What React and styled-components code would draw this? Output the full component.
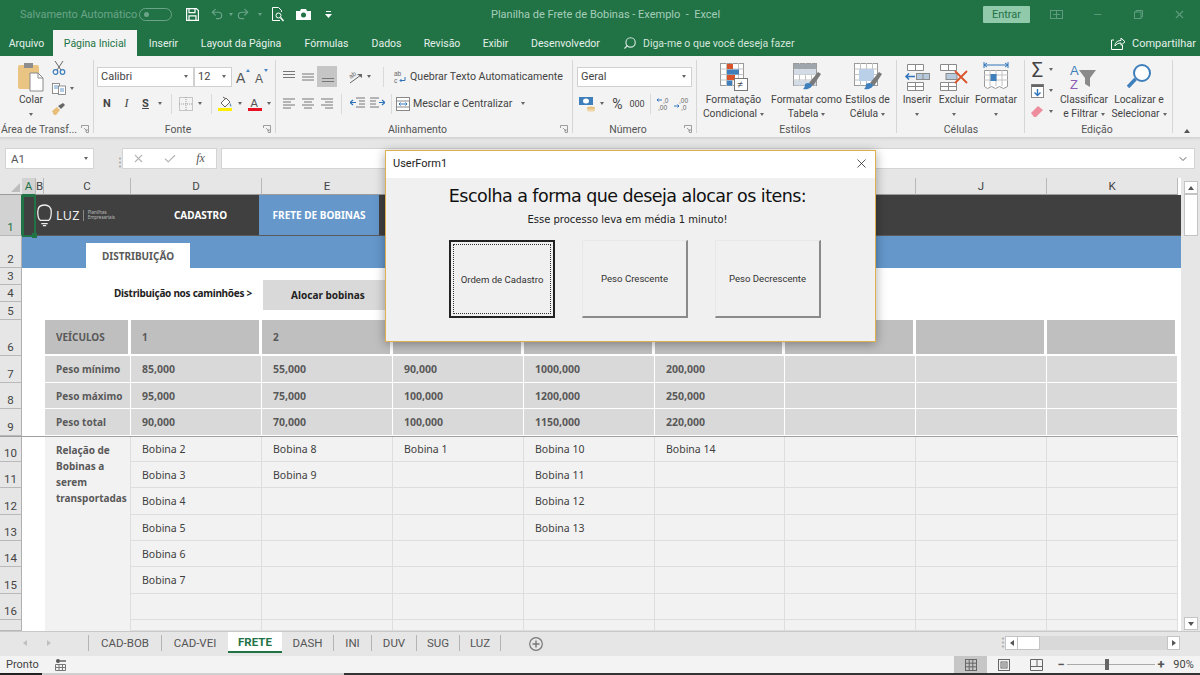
import React from 'react';
import styled, { createGlobalStyle } from 'styled-components';
import { Undo2, Redo2, Search, X, ChevronDown, Check } from 'lucide-react';

const GlobalStyle = createGlobalStyle`
  html, body { margin: 0; padding: 0; background: #e6e6e6; }
  * { box-sizing: border-box; }
`;

const UI = `Roboto, "Noto Sans", sans-serif`;
const CELLS = `"Noto Sans", "Open Sans", sans-serif`;
const GREEN = '#217346';

const Page = styled.div`
  position: relative;
  width: 1200px;
  height: 675px;
  overflow: hidden;
  display: flex;
  flex-direction: column;
  font-family: ${UI};
  font-size: 11px;
  color: #444;
`;

/* title bar */
const TitleBar = styled.div`
  height: 28px;
  background: ${GREEN};
  display: flex;
  align-items: center;
`;
const QuickAccess = styled.div`
  width: 491px;
  padding-left: 20px;
  display: flex;
  align-items: center;
  color: #6ba488;
`;
const AutoSave = styled.span`
  width: 119px;
  font-size: 11px;
  white-space: nowrap;
`;
const Toggle = styled.span`
  width: 33px;
  height: 13px;
  border: 1px solid #6ba488;
  border-radius: 7px;
  display: flex;
  align-items: center;
  padding-left: 4px;
  margin-right: 12px;
  &::before { content: ''; width: 5px; height: 5px; border-radius: 50%; background: #6ba488; }
`;
const QuickBtn = styled.span`
  width: ${p => p.$w}px;
  margin-left: ${p => p.$ml || 0}px;
  display: flex;
  justify-content: center;
  align-items: center;
  flex: none;
`;
const QuickCaret = styled.span`
  flex: none;
  width: 0;
  height: 0;
  margin: 0 ${p => p.$m}px;
  border-left: 2.5px solid transparent;
  border-right: 2.5px solid transparent;
  border-top: 3px solid #6ba488;
`;
const DocTitle = styled.span`
  color: #a6cdb9;
  font-size: 11px;
  white-space: pre;
`;
const TitleRight = styled.div`
  margin-left: auto;
  display: flex;
  align-items: center;
`;
const SignIn = styled.span`
  width: 47px;
  height: 17px;
  margin-right: 6px;
  background: #91c9ab;
  color: ${GREEN};
  border-radius: 1px;
  font-size: 11px;
  display: flex;
  align-items: center;
  justify-content: center;
`;
const WinBtn = styled.span`
  width: 41px;
  display: flex;
  justify-content: center;
  color: #5d9d7e;
`;

/* ribbon tabs */
const TabRow = styled.div`
  height: 28px;
  background: ${GREEN};
  display: flex;
  align-items: flex-end;
  color: #e4f0ea;
  font-size: 10.5px;
`;
const RibbonTab = styled.span`
  width: ${p => p.$w}px;
  height: 26px;
  flex: none;
  display: flex;
  align-items: center;
  justify-content: center;
  white-space: nowrap;
  background: ${p => (p.$active ? '#f3f3f3' : 'transparent')};
  color: ${p => (p.$active ? GREEN : 'inherit')};
`;
const TellMe = styled.span`
  width: 499px;
  padding-left: 11px;
  height: 26px;
  display: flex;
  align-items: center;
  gap: 6px;
  color: #d3e5db;
`;
const Share = styled.span`
  height: 26px;
  display: flex;
  align-items: center;
  gap: 6px;
  white-space: nowrap;
  font-size: 11px;
`;

/* ribbon */
const Ribbon = styled.div`
  height: 82px;
  background: #f3f3f3;
  border-bottom: 1px solid #d4d4d4;
  box-shadow: 0 1px 2px rgba(0,0,0,.08);
  display: flex;
  position: relative;
`;
const Group = styled.div`
  position: relative;
  width: ${p => p.$w}px;
  flex: none;
  display: flex;
  flex-direction: column;
  &::after {
    content: '';
    position: absolute;
    right: 0;
    top: 4px;
    bottom: 4px;
    width: 1px;
    background: ${p => (p.$noline ? 'transparent' : '#d6d6d6')};
  }
`;
const GroupBody = styled.div`
  height: 67px;
  display: flex;
  padding-left: ${p => p.$pl || 0}px;
`;
const GroupLabel = styled.div`
  height: 14px;
  text-align: center;
  font-size: 10.5px;
  line-height: 14px;
  color: #555;
  white-space: nowrap;
  padding-right: ${p => p.$pr || 0}px;
`;
const LauncherBox = styled.span`
  position: absolute;
  right: 5px;
  bottom: 4px;
  display: flex;
`;
const Stack = styled.div`
  display: flex;
  flex-direction: column;
  width: ${p => (p.$w ? `${p.$w}px` : 'auto')};
  margin-left: ${p => p.$ml || 0}px;
  padding-top: ${p => p.$pt ?? 10}px;
  gap: ${p => p.$gap ?? 6}px;
`;
const Line = styled.div`
  display: flex;
  align-items: center;
  height: 21px;
`;
const Btn = styled.span`
  width: ${p => p.$w || 19}px;
  height: ${p => p.$h || 21}px;
  margin-left: ${p => p.$ml || 0}px;
  flex: none;
  display: flex;
  align-items: center;
  justify-content: center;
  background: ${p => (p.$on ? '#c6c6c6' : 'transparent')};
  font-family: ${p => (p.$serif ? '"Liberation Serif", serif' : 'inherit')};
  font-weight: ${p => (p.$bold ? 700 : 400)};
  font-style: ${p => (p.$italic ? 'italic' : 'normal')};
  text-decoration: ${p => (p.$under ? 'underline' : 'none')};
  font-size: ${p => p.$fs || 11}px;
`;
const FontStep = styled.span`
  position: relative;
  width: ${p => p.$w}px;
  height: 21px;
  margin-left: ${p => p.$ml || 0}px;
  padding: ${p => (p.$down ? '5px 5px 0 2px' : '3px 5px 0 3px')};
  flex: none;
  display: flex;
  align-items: center;
  font-family: "Liberation Sans", sans-serif;
  font-size: ${p => (p.$down ? 12 : 14)}px;
  color: #555;
  &::after {
    content: '';
    position: absolute;
    right: ${p => (p.$down ? 4 : 3)}px;
    top: 3px;
    border-left: 2.5px solid transparent;
    border-right: 2.5px solid transparent;
    ${p => (p.$down ? 'border-top' : 'border-bottom')}: 3px solid #4a86c2;
  }
`;
const Sep = styled.span`
  width: 1px;
  height: 20px;
  background: #dadada;
  margin: 0 ${p => p.$m ?? 6}px;
  flex: none;
`;
const Caret = styled.span`
  flex: none;
  width: 0;
  height: 0;
  margin: 0 ${p => p.$m ?? 0}px;
  border-left: 2.5px solid transparent;
  border-right: 2.5px solid transparent;
  border-top: 3px solid #666;
  display: inline-block;
`;
const Select = styled.span`
  width: ${p => p.$w}px;
  height: 20px;
  flex: none;
  background: #fff;
  border: 1px solid #d0d0d0;
  padding: 0 5px 0 3px;
  display: flex;
  align-items: center;
  justify-content: space-between;
  font-size: 11px;
`;
const TextBtn = styled.span`
  display: flex;
  align-items: center;
  gap: 3px;
  white-space: nowrap;
  font-size: 10.6px;
`;
const Big = styled.div`
  width: ${p => p.$w}px;
  flex: none;
  display: flex;
  flex-direction: column;
  align-items: center;
  padding-top: 6px;
  font-size: 10.3px;
  line-height: 14px;
  white-space: nowrap;
`;
const BigIcon = styled.div`
  height: 30px;
  display: flex;
  align-items: center;
  justify-content: center;
  margin-bottom: 1px;
`;
const BigLine = styled.span`
  display: flex;
  align-items: center;
  gap: 3px;
  height: 14px;
`;

/* formula bar */
const FormulaBar = styled.div`
  height: 40px;
  background: #e6e6e6;
  padding: 10px 5px 0;
  display: flex;
  align-items: flex-start;
`;
const Field = styled.div`
  height: 21px;
  width: ${p => (p.$w ? `${p.$w}px` : 'auto')};
  flex: ${p => (p.$w ? 'none' : 1)};
  background: #fff;
  border: 1px solid #d4d4d4;
  display: flex;
  align-items: center;
  justify-content: space-between;
  padding: 0 5px;
  color: #555;
  font-size: 11.5px;
`;
const Dots = styled.span`
  width: 28px;
  flex: none;
  align-self: center;
  display: flex;
  justify-content: center;
  color: #aaa;
  font-size: 9px;
  line-height: 4px;
  writing-mode: vertical-rl;
  letter-spacing: 1px;
`;
const FxBtns = styled(Field)`
  justify-content: flex-start;
  padding: 0;
  margin-right: 4px;
`;
const FxBtn = styled.span`
  width: 31px;
  display: flex;
  justify-content: center;
  color: #b5b5b5;
`;
const FxLabel = styled.span`
  font-family: "Liberation Serif", serif;
  font-style: italic;
  font-size: 12px;
  color: #555;
`;

/* sheet */
const SheetArea = styled.div`
  height: 453px;
  display: flex;
  background: #e6e6e6;
`;
const Sheet = styled.div`
  width: 1181px;
  height: 453px;
  background: #fff;
  display: grid;
  grid-template-columns: 22px 14px 8px 87px 131px 131px 131px 131px 130px 131px 131px 131px 3px;
  grid-template-rows: 17px 41px 32px 17px 17px 18px 36px 27px 26px 27px 26px 26px 27px 26px 26px 27px 26px 11px;
  overflow: hidden;
  font-family: ${CELLS};
`;
const ColHead = styled.div`
  grid-column: ${p => p.$col};
  grid-row: 1;
  background: ${p => (p.$on ? '#d2d2d2' : '#e6e6e6')};
  color: ${p => (p.$on ? GREEN : '#444')};
  border-right: 1px solid #b9b9b9;
  border-bottom: 1px solid ${p => (p.$on ? GREEN : '#9c9c9c')};
  display: flex;
  align-items: center;
  justify-content: center;
  font-family: ${UI};
  font-size: 11.5px;
`;
const Corner = styled.div`
  grid-column: 1;
  grid-row: 1;
  background: #e6e6e6;
  border-bottom: 1px solid #9c9c9c;
  display: flex;
  align-items: flex-end;
  justify-content: flex-end;
  padding: 0 2px 2px 0;
  &::after {
    content: '';
    border-left: 9px solid transparent;
    border-bottom: 9px solid #bdbdbd;
  }
`;
const RowHead = styled.div`
  grid-column: 1;
  grid-row: ${p => p.$row};
  background: ${p => (p.$on ? '#d2d2d2' : '#e6e6e6')};
  color: ${p => (p.$on ? GREEN : '#444')};
  border-right: 1px solid ${p => (p.$on ? GREEN : '#b0b0b0')};
  border-bottom: 1px solid #b9b9b9;
  display: flex;
  align-items: flex-end;
  justify-content: center;
  font-family: ${UI};
  font-size: 11.5px;
  line-height: 15px;
`;
const HeaderBand = styled.div`
  grid-column: 2 / -1;
  grid-row: 2;
  background: #404040;
  display: flex;
  color: #fff;
  font-weight: 700;
  font-size: 10px;
  border-bottom: 1px solid #5a5a5a;
`;
const LogoWrap = styled.div`
  width: 120px;
  padding-left: 15px;
  display: flex;
  align-items: center;
  color: #eee;
`;
const LogoName = styled.span`
  font-size: 12.5px;
  font-weight: 400;
  margin-left: 4px;
  letter-spacing: .3px;
`;
const LogoSub = styled.span`
  margin-left: 3px;
  padding-left: 4px;
  border-left: 1px solid #888;
  font-size: 4.5px;
  line-height: 5.5px;
  font-weight: 400;
  color: #bbb;
`;
const NavItem = styled.div`
  width: ${p => p.$w}px;
  flex: none;
  display: flex;
  align-items: center;
  justify-content: center;
  background: ${p => (p.$on ? '#6597cb' : 'transparent')};
`;
const BlueBand = styled.div`
  grid-column: 2 / -1;
  grid-row: 3;
  background: #6597cb;
  padding: 7px 0 0 64px;
  display: flex;
`;
const SubTab = styled.div`
  width: 104px;
  background: #fff;
  display: flex;
  align-items: center;
  justify-content: center;
  font-size: 10px;
  font-weight: 700;
  color: #595959;
`;
const ActionLabel = styled.div`
  grid-column: 2 / 6;
  grid-row: 4 / 7;
  display: flex;
  align-items: center;
  justify-content: flex-end;
  padding: 0 10px 3px 0;
  font-size: 10px;
  font-weight: 700;
  letter-spacing: -.28px;
  color: #222;
`;
const ActionBtn = styled.div`
  grid-column: 6;
  grid-row: 4 / 7;
  margin: 12px 0 10px 1px;
  background: #d9d9d9;
  display: flex;
  align-items: center;
  justify-content: center;
  font-size: 10px;
  font-weight: 700;
  color: #222;
`;
const tones = {
  head: { bg: '#bfbfbf', line: '#fff', weight: 700, right: 3, bottom: 2, size: 10 },
  sub: { bg: '#d9d9d9', line: '#fff', weight: 700, right: 1, bottom: 1, size: 10.5 },
  body: { bg: '#f2f2f2', line: '#dedede', weight: 400, right: 1, bottom: 1, size: 10.5 },
};
const Cell = styled.div`
  grid-column: ${p => p.$col};
  grid-row: ${p => p.$row};
  background: ${p => tones[p.$tone].bg};
  border-right: ${p => tones[p.$tone].right}px solid ${p => tones[p.$tone].line};
  border-bottom: ${p => tones[p.$tone].bottom}px solid ${p => tones[p.$tone].line};
  display: flex;
  align-items: center;
  padding-left: 11px;
  font-size: ${p => tones[p.$tone].size}px;
  font-weight: ${p => tones[p.$tone].weight};
  color: ${p => (p.$tone === 'body' ? '#404040' : '#595959')};
`;
const LabelCol = styled.div`
  grid-column: 4;
  grid-row: ${p => p.$row};
  margin-left: 1px;
  background: ${p => tones[p.$tone].bg};
  border-right: ${p => tones[p.$tone].right}px solid ${p => tones[p.$tone].line};
  border-bottom: ${p => tones[p.$tone].bottom}px solid ${p => tones[p.$tone].line};
  display: flex;
  align-items: center;
  padding-left: 11px;
  font-size: 10px;
  font-weight: 700;
  color: #595959;
`;
const BobinaLabel = styled(LabelCol)`
  align-items: flex-start;
  padding-top: 6px;
  line-height: 16px;
  border-bottom: none;
  white-space: pre-line;
`;
const RowRule = styled.div`
  grid-column: 1 / 13;
  grid-row: 11;
  height: 1px;
  background: #a0a0a0;
  z-index: 1;
`;
const Scroll = styled.div`
  flex: 1;
  padding: 3px 0 1px 3px;
  display: flex;
  flex-direction: column;
`;
const ScrollArrow = styled.div`
  width: 14px;
  height: 13px;
  background: #fff;
  border: 1px solid #c4c4c4;
  display: flex;
  align-items: center;
  justify-content: center;
`;
const ScrollThumb = styled.div`
  width: 14px;
  height: 42px;
  background: #fff;
  border: 1px solid #c4c4c4;
  margin-bottom: auto;
`;
const Tri = styled.span`
  display: inline-block;
  width: 0;
  height: 0;
  border-left: 3px solid transparent;
  border-right: 3px solid transparent;
  ${p => (p.$up ? 'border-bottom' : 'border-top')}: 4px solid #555;
`;
const SideTri = styled.span`
  width: 0;
  height: 0;
  border-top: 3px solid transparent;
  border-bottom: 3px solid transparent;
  ${p => (p.$left ? 'border-right' : 'border-left')}: 4px solid ${p => p.$c || '#555'};
`;
const Selection = styled.div`
  position: absolute;
  left: 22px;
  top: 195px;
  width: 14px;
  height: 42px;
  border: 2px solid ${GREEN};
  &::after {
    content: '';
    position: absolute;
    right: -3px;
    bottom: -3px;
    width: 5px;
    height: 5px;
    background: ${GREEN};
  }
`;

/* sheet tabs */
const SheetTabs = styled.div`
  height: 25px;
  background: #e6e6e6;
  border-top: 1px solid #c8c8c8;
  display: flex;
  align-items: stretch;
`;
const TabNav = styled.div`
  width: 89px;
  padding: 0 37px 0 23px;
  border-right: 1px solid #b4b4b4;
  margin: 3px 0 5px;
  display: flex;
  align-items: center;
  justify-content: space-between;
`;
const SheetTab = styled.span`
  width: ${p => p.$w}px;
  flex: none;
  display: flex;
  align-items: center;
  justify-content: center;
  font-size: 11.5px;
  color: ${p => (p.$on ? GREEN : '#555')};
  font-weight: ${p => (p.$on ? 700 : 400)};
  background: ${p => (p.$on ? '#fff' : 'transparent')};
  margin-bottom: ${p => (p.$on ? 3 : 5)}px;
  margin-top: ${p => (p.$on ? 0 : 3)}px;
  border-bottom: ${p => (p.$on ? `2px solid ${GREEN}` : 'none')};
  border-right: ${p => (p.$on || p.$noline ? 'none' : '1px solid #b4b4b4')};
`;
const AddSheet = styled.span`
  margin: 0 0 0 28px;
  align-self: center;
  display: flex;
`;
const HScroll = styled.div`
  margin: 4px 20px 0 auto;
  display: flex;
  align-items: flex-start;
  height: 14px;
`;
const HDots = styled(Dots)`
  width: 14px;
  height: 14px;
`;
const HArrow = styled.span`
  width: 13px;
  height: 14px;
  background: #fff;
  border: 1px solid #c4c4c4;
  display: flex;
  align-items: center;
  justify-content: center;
`;
const HThumb = styled.span`
  width: 22px;
  height: 14px;
  background: #fff;
  border: 1px solid #c4c4c4;
  border-left: none;
`;
const HTrack = styled.span`
  width: 127px;
  height: 14px;
  background: #d9d9d9;
`;

/* status bar */
const StatusBar = styled.div`
  height: 17px;
  background: #f3f3f3;
  display: flex;
  align-items: center;
  padding-left: 6px;
  font-size: 11px;
  color: #444;
`;
const StatusText = styled.span`
  width: 49px;
`;
const StatusIcon = styled.span`
  display: flex;
`;
const ViewGroup = styled.div`
  margin-left: auto;
  display: flex;
  align-items: center;
  height: 17px;
`;
const ViewBtn = styled.span`
  width: 33px;
  height: 17px;
  margin-right: ${p => p.$mr || 0}px;
  background: ${p => (p.$on ? '#c6c6c6' : 'transparent')};
  display: flex;
  align-items: center;
  justify-content: center;
`;
const ZoomSlider = styled.span`
  position: relative;
  width: 88px;
  height: 1px;
  background: #aaa;
`;
const ZoomThumb = styled.span`
  position: absolute;
  left: 38px;
  top: -5px;
  width: 4px;
  height: 11px;
  background: #666;
`;
const ZoomSign = styled.span`
  width: 12px;
  text-align: center;
  font-size: 13px;
  line-height: 13px;
  color: #555;
  font-weight: 700;
`;
const ZoomPct = styled.span`
  width: 33px;
  text-align: center;
  font-size: 11px;
`;
const TaskStrip = styled.div`
  height: 2px;
  background: linear-gradient(90deg, #222 0 42px, #cfcfcf 42px 344px, #333 344px);
`;

/* userform dialog */
const Dialog = styled.div`
  position: absolute;
  left: 385px;
  top: 150px;
  width: 491px;
  height: 192px;
  border: 1px solid #e0b050;
  background: #f0f0f0;
  box-shadow: 0 2px 10px rgba(0,0,0,.35);
  display: flex;
  flex-direction: column;
  font-family: "DejaVu Sans", sans-serif;
`;
const DialogTitle = styled.div`
  height: 27px;
  background: #fff;
  padding: 0 6px 3px 7px;
  display: flex;
  align-items: center;
  justify-content: space-between;
  font-family: ${UI};
  font-size: 11px;
  color: #222;
`;
const DialogHeading = styled.div`
  margin-top: 6px;
  padding-right: 6px;
  text-align: center;
  font-size: 17.5px;
  line-height: 24px;
  letter-spacing: -.55px;
  color: #111;
  white-space: nowrap;
`;
const DialogSub = styled.div`
  margin-top: 4px;
  padding-right: 6px;
  text-align: center;
  font-size: 10px;
  line-height: 15px;
  color: #222;
`;
const ChoiceRow = styled.div`
  margin: 13px 0 0 63px;
  display: flex;
  gap: 27px;
`;
const Choice = styled.div`
  position: relative;
  width: 106px;
  height: 78px;
  background: #f0f0f0;
  display: flex;
  align-items: center;
  justify-content: center;
  font-family: ${UI};
  font-size: 9.6px;
  color: #333;
  border-top: 1px solid #e8e8e8;
  border-left: 1px solid #e8e8e8;
  border-right: 2px solid #8a8a8a;
  border-bottom: 2px solid #8a8a8a;
  ${p => p.$focus && `
    border: 2px solid #222;
    &::after {
      content: '';
      position: absolute;
      inset: 2px;
      border: 1px dotted #333;
    }
  `}
`;

/* drawings */
const Launcher = () => (
  <svg width="8" height="8" viewBox="0 0 8 8"><path d="M.5 3V.5H7.500V7.500H5M3 3l3 3M6 4v2H4" fill="none" stroke="#888" strokeWidth=".8" /></svg>
);
const PasteIcon = () => (
  <svg width="26" height="30" viewBox="0 0 26 30">
    <rect x="0" y="3" width="21" height="24" rx="2" fill="#eac483" />
    <rect x="6" y="1" width="9" height="5" fill="#8d8d8d" />
    <path d="M12 11h8l5 5v13H12z" fill="#fff" stroke="#8a8a8a" />
    <path d="M20 11v5h5" fill="none" stroke="#8a8a8a" />
  </svg>
);
const CutIcon = () => (
  <svg width="14" height="14" viewBox="0 0 14 14" fill="none">
    <path d="M3 0l6 9M11 0L5 9" stroke="#666" />
    <circle cx="3.500" cy="11" r="2.300" stroke="#3f7fbc" strokeWidth="1.200" />
    <circle cx="10.500" cy="11" r="2.300" stroke="#3f7fbc" strokeWidth="1.200" />
  </svg>
);
const CopyIcon = () => (
  <svg width="14" height="12" viewBox="0 0 14 12" fill="#fff" stroke="#777" strokeWidth=".8">
    <rect x=".5" y=".5" width="7" height="10" />
    <rect x="6.500" y="3" width="7" height="8.500" />
    <path d="M2 3h4M2 5h4M8 6h4M8 8h4" stroke="#3f7fbc" />
  </svg>
);
const BrushIcon = () => (
  <svg width="14" height="12" viewBox="0 0 14 12">
    <path d="M0 8l5-4 3 3-4 5H2z" fill="#e8bd78" />
    <path d="M6 3l3 3 4-4-2-2z" fill="#666" />
  </svg>
);
const Borders = () => (
  <svg width="14" height="14" viewBox="0 0 14 14" fill="none" stroke="#999" strokeDasharray="1 1">
    <rect x=".5" y=".5" width="13" height="13" /><path d="M7 0v14M0 7h14" />
  </svg>
);
const FillColor = () => (
  <svg width="15" height="15" viewBox="0 0 15 15">
    <path d="M3 7l5-5 4 4-5 5z" fill="#fff" stroke="#666" />
    <path d="M5 1l3 2" stroke="#666" />
    <path d="M12 7c1 1.500 2 3 1 3.500-1 .3-1.500-1-1-3.500" fill="#4f8ac4" />
    <rect x="0" y="12" width="14" height="3" fill="#ffee00" />
  </svg>
);
const FontColor = () => (
  <svg width="15" height="15" viewBox="0 0 15 15">
    <text x="2.500" y="10.500" fontSize="11" fontFamily="Liberation Sans" fill="#555">A</text>
    <rect x="0" y="12" width="14" height="3" fill="#e81123" />
  </svg>
);
const Align = ({ kind }) => {
  const rows = {
    top: ['M1 1.500h12', 'M1 4.500h12', 'M1 7.500h12'],
    middle: ['M1 4h12', 'M1 7h12', 'M1 10h12'],
    bottom: ['M2 8.500h12', 'M2 11.500h12'],
    left: ['M1 2h12', 'M1 5h8', 'M1 8h12', 'M1 11h8'],
    center: ['M1 2h12', 'M3 5h8', 'M1 8h12', 'M3 11h8'],
    right: ['M1 2h12', 'M5 5h8', 'M1 8h12', 'M5 11h8'],
  };
  return (
    <svg width="14" height="14" viewBox="0 0 14 14" fill="none" stroke="#777">
      {rows[kind].map(d => <path key={d} d={d} />)}
    </svg>
  );
};
const Indent = ({ flip }) => (
  <svg width="15" height="13" viewBox="0 0 15 13" fill="none" style={flip ? { transform: 'scaleX(-1)' } : undefined}>
    <path d="M6 1h9M9 4h6M9 7h6M6 10h9" stroke="#777" />
    <path d="M0 5.500h6M3 3l-3 2.500L3 8" stroke="#2f74bb" strokeWidth="1.200" />
  </svg>
);
const Orientation = () => (
  <svg width="18" height="17" viewBox="0 0 18 17">
    <text x="3" y="9" fontSize="6.500" fontFamily="Liberation Sans" fill="#666" transform="rotate(-35 7 7)">ab</text>
    <path d="M4 15L15 7" stroke="#666" />
    <path d="M11 6h5v4z" fill="#666" />
  </svg>
);
const WrapIcon = () => (
  <svg width="14" height="14" viewBox="0 0 14 14">
    <text x="1" y="6" fontSize="6.500" fontFamily="Liberation Sans" fill="#666">ab</text>
    <text x="1" y="13" fontSize="6.500" fontFamily="Liberation Sans" fill="#666">c</text>
    <path d="M12 7v3.500H7M8.500 9L7 10.500 8.500 12" fill="none" stroke="#2f74bb" />
  </svg>
);
const MergeIcon = () => (
  <svg width="14" height="14" viewBox="0 0 14 14" fill="#fff" stroke="#888">
    <rect x=".5" y=".5" width="13" height="13" />
    <path d="M.5 4h13M.5 10h13" />
    <path d="M3 7h8M4.500 5.500L3 7l1.500 1.500M9.500 5.500L11 7 9.500 8.500" stroke="#2f74bb" fill="none" />
  </svg>
);
const Currency = () => (
  <svg width="20" height="17" viewBox="0 0 20 17">
    <rect x="1" y="2" width="14" height="8" fill="#3f7fbc" />
    <ellipse cx="8" cy="6" rx="3" ry="2.500" fill="#fff" />
    <ellipse cx="13" cy="13" rx="4" ry="1.500" fill="#e8bd78" />
    <ellipse cx="13" cy="15" rx="4" ry="1.500" fill="#eed3a5" />
  </svg>
);
const Decimal = ({ more }) => (
  <svg width="16" height="14" viewBox="0 0 16 14">
    <text x={more ? 5 : 7} y="6" fontSize="6.500" fontFamily="Liberation Sans" fill="#666">{more ? ',00' : ',0'}</text>
    <text x={more ? 7 : 2} y="13" fontSize="6.500" fontFamily="Liberation Sans" fill="#666">{more ? ',0' : ',00'}</text>
    <path d={more ? 'M0 9h5M3.500 7.500L5 9l-1.500 1.500' : 'M1 3h5M2.500 1.500L1 3l1.500 1.500'} fill="none" stroke="#2f74bb" />
  </svg>
);
const TableBase = ({ children, fill = '#fff' }) => (
  <svg width="28" height="28" viewBox="0 0 28 28">
    <rect x=".5" y=".5" width="23" height="22" fill={fill} stroke="#9a9a9a" />
    <path d="M.5 6h23M.5 11.500h23M.5 17h23M6.500 0v23M12.500 0v23M18.500 0v23" stroke="#c2c2c2" fill="none" />
    {children}
  </svg>
);
const ConditionalIcon = () => (
  <TableBase>
    <rect x="7" y="1" width="6" height="5" fill="#d9542b" />
    <rect x="7" y="6.500" width="12" height="5" fill="#3f7fbc" />
    <rect x="7" y="12" width="8" height="5" fill="#d9542b" />
    <rect x="7" y="17.500" width="5" height="5" fill="#3f7fbc" />
    <rect x="14.500" y="15.500" width="13" height="12" fill="#fff" stroke="#777" />
    <text x="17.500" y="25" fontSize="10" fontFamily="Liberation Sans" fill="#444">≠</text>
  </TableBase>
);
const Painter = () => (
  <g>
    <path d="M16 20l9-11 3 2-8 12z" fill="#7a7a7a" />
    <path d="M12 21c3-2 6-1 7 1 0 3-5 5-9 4 1-1 2-2 2-5z" fill="#3f7fbc" />
  </g>
);
const TableStyleIcon = () => (
  <TableBase>
    <rect x="1" y="1" width="22" height="5" fill="#a0a6ae" />
    <rect x="1" y="6.500" width="22" height="5" fill="#d2dbe6" />
    <rect x="1" y="17.500" width="22" height="5" fill="#d2dbe6" />
    <Painter />
  </TableBase>
);
const CellStyleIcon = () => (
  <TableBase>
    <rect x="5" y="6" width="15" height="12" fill="#b9d0e8" />
    <Painter />
  </TableBase>
);
const InsertIcon = () => (
  <svg width="26" height="28" viewBox="0 0 26 28" fill="#fff" stroke="#8a8a8a">
    <path d="M3.500 1.500h16v6h-16zM11.500 1.500v6M3.500 19.500h16v8h-16zM3.500 23.500h16M11.500 19.500v8" />
    <rect x="12.500" y="10.500" width="13" height="6" fill="#b7c9dc" />
    <path d="M19 10.500v6" />
    <path d="M2 13.500h9M5 10.500l-3 3 3 3" fill="none" stroke="#2f74bb" strokeWidth="1.500" />
  </svg>
);
const DeleteIcon = () => (
  <svg width="28" height="28" viewBox="0 0 28 28" fill="#fff" stroke="#8a8a8a">
    <path d="M.5 1.500h16v6H.5zM8.500 1.500v6M.5 19.500h16v8H.5zM.500 23.500h16M8.500 19.500v8" />
    <rect x="6" y="10.500" width="11" height="6" fill="#b7c9dc" />
    <path d="M15 8l12 12M27 8L15 20" stroke="#d9542b" strokeWidth="1.800" />
  </svg>
);
const FormatIcon = () => (
  <svg width="26" height="30" viewBox="0 0 26 30" fill="none">
    <path d="M1 3h24M4 1L1 3l3 2M22 1l3 2-3 2M1 0v6M25 0v6" stroke="#2f74bb" />
    <path d="M1.500 8.500h23v16l-4 2-4-2-4 2-4-2-4 2-3-2z" fill="#fff" stroke="#9a9a9a" />
    <path d="M1 13h24M1 18h24M7 8v16M13 8v16M19 8v16" stroke="#c2c2c2" />
    <rect x="7.500" y="12" width="6" height="7" fill="#3f7fbc" />
  </svg>
);
const FillDown = () => (
  <svg width="14" height="14" viewBox="0 0 14 14">
    <rect x=".5" y=".5" width="12" height="13" fill="#fff" stroke="#888" />
    <rect x=".5" y=".5" width="12" height="2.500" fill="#666" />
    <path d="M6.500 5v6M3.500 8.500l3 3 3-3" fill="none" stroke="#2f74bb" strokeWidth="1.400" />
  </svg>
);
const Eraser = () => (
  <svg width="13" height="11" viewBox="0 0 13 11"><path d="M0 7l7-7 5 4-7 7H3z" fill="#ee8d9e" /></svg>
);
const SortIcon = () => (
  <svg width="30" height="30" viewBox="0 0 30 30">
    <text x="1" y="13" fontSize="13" fontFamily="Liberation Sans" fill="#3f7fbc">A</text>
    <text x="1" y="27" fontSize="13" fontFamily="Liberation Sans" fill="#8e5bb5">Z</text>
    <path d="M10 8h17l-6 8v9l-5-3v-6z" fill="#8a8a8a" />
  </svg>
);
const FindIcon = () => (
  <svg width="26" height="28" viewBox="0 0 26 28" fill="none">
    <circle cx="16" cy="10" r="8" stroke="#3f7fbc" strokeWidth="2" fill="#fff" />
    <path d="M9.500 16L2 24" stroke="#3f7fbc" strokeWidth="3.500" />
  </svg>
);
const SaveIcon = () => (
  <svg width="13" height="13" viewBox="0 0 13 13" fill="none" stroke="#fff" strokeWidth="1.200">
    <path d="M.6.6h9.800l2 2v9.800H.6z" /><path d="M3 .6v4h6v-4M3 12.400v-4.500h7v4.500" />
  </svg>
);
const PreviewIcon = () => (
  <svg width="13" height="15" viewBox="0 0 13 15" fill="none" stroke="#fff">
    <path d="M8 13.500H.5V.5h6l3 3V5" /><circle cx="6.500" cy="8.500" r="2.500" /><path d="M8.500 10.500l3 3.500" strokeWidth="1.500" />
  </svg>
);
const CameraIcon = () => (
  <svg width="15" height="11" viewBox="0 0 15 11">
    <path d="M0 2h4l1-2h5l1 2h4v9H0z" fill="#fff" /><circle cx="7.500" cy="6" r="2.500" fill={GREEN} />
  </svg>
);
const Customize = () => (
  <svg width="7" height="7" viewBox="0 0 7 7" fill="#fff"><rect x="1" y="0" width="5" height="1" /><path d="M0 3h7L3.500 7z" /></svg>
);
const CardsIcon = () => (
  <svg width="13" height="9" viewBox="0 0 13 9" fill="none" stroke="#5d9d7e"><rect x=".5" y=".5" width="12" height="8" /><path d="M6.500 1v7M3 4.500h7" /></svg>
);
const RestoreIcon = () => (
  <svg width="9" height="9" viewBox="0 0 9 9" fill="none" stroke="#5d9d7e"><path d="M2 2V.5h6.500V7H7" /><rect x=".5" y="2" width="6.500" height="6.500" /></svg>
);
const ShareIcon = () => (
  <svg width="15" height="13" viewBox="0 0 15 13" fill="none" stroke="#fff"><path d="M3 3H.5v9.500h11V8" /><path d="M4 9c0-4 3-5.500 6-5.500V1l4 3.800-4 3.500V6C7 6 5.500 7 4 9z" /></svg>
);
const LogoBulb = () => (
  <svg width="15" height="23" viewBox="0 0 14 21" fill="none" stroke="#eee" strokeWidth="1.200">
    <path d="M3 15C1 13.500.7 11 .7 7 .7 3 3 .7 7 .7s6.300 2.300 6.300 6.300c0 4-.3 6.500-2.300 8z" />
    <path d="M4 18h6M5.500 20h3" />
  </svg>
);
const PageView = () => (
  <svg width="12" height="12" viewBox="0 0 12 12" fill="none" stroke="#666"><rect x=".5" y=".5" width="11" height="11" /><rect x="3" y="3" width="6" height="6" /><path d="M4 5h4M4 7h4" /></svg>
);
const GridView = () => (
  <svg width="12" height="12" viewBox="0 0 12 12" fill="none" stroke="#666"><rect x=".5" y=".5" width="11" height="11" /><path d="M4.200 0v12M7.800 0v12M0 4.200h12M0 7.800h12" /></svg>
);
const BreakView = () => (
  <svg width="13" height="12" viewBox="0 0 13 12" fill="none" stroke="#666"><path d="M.5 11.500V.5h12v11zM.5 7.500h12M7 .5v7" /></svg>
);
const MacroIcon = () => (
  <svg width="11" height="12" viewBox="0 0 11 12"><circle cx="3" cy="2" r="2" fill="#555" /><rect x="5" y="1" width="6" height="2" fill="#888" /><path d="M.5 5.500h10v6H.5zM4 5.500v6M7.500 5.500v6M.5 8.500h10" fill="none" stroke="#777" /></svg>
);
const PlusCircle = () => (
  <svg width="14" height="14" viewBox="0 0 14 14" fill="none" stroke="#777"><circle cx="7" cy="7" r="6.300" strokeWidth="1.200" /><path d="M3.500 7h7M7 3.500v7" strokeWidth="1.400" /></svg>
);

/* data */
const colLetters = ['A', 'B', 'C', 'D', 'E', 'F', 'G', 'H', 'I', 'J', 'K'];
const rowHeads = Array.from({ length: 16 }, (_, i) => i + 1);
const pesos = [
  ['Peso mínimo', '85,000', '55,000', '90,000', '1000,000', '200,000'],
  ['Peso máximo', '95,000', '75,000', '100,000', '1200,000', '250,000'],
  ['Peso total', '90,000', '70,000', '100,000', '1150,000', '220,000'],
];
const bobinas = [
  ['Bobina 2', 'Bobina 8', 'Bobina 1', 'Bobina 10', 'Bobina 14'],
  ['Bobina 3', 'Bobina 9', '', 'Bobina 11', ''],
  ['Bobina 4', '', '', 'Bobina 12', ''],
  ['Bobina 5', '', '', 'Bobina 13', ''],
  ['Bobina 6', '', '', '', ''],
  ['Bobina 7', '', '', '', ''],
  ['', '', '', '', ''],
  ['', '', '', '', ''],
];
const sheets = [['CAD-BOB', 73], ['CAD-VEI', 66], ['FRETE', 54], ['DASH', 52], ['INI', 38], ['DUV', 45], ['SUG', 43], ['LUZ', 41]];
const dataCols = [5, 6, 7, 8, 9, 10, 11, 12];

const BigButton = ({ w, icon, first, second }) => (
  <Big $w={w}>
    <BigIcon>{icon}</BigIcon>
    <BigLine>{first}</BigLine>
    <BigLine>{second}<Caret /></BigLine>
  </Big>
);

const RibbonPanel = () => (
  <Ribbon>
    <Group $w={94}>
      <GroupBody $pl={17}>
        <Big $w={28}>
          <BigIcon><PasteIcon /></BigIcon>
          <BigLine>Colar</BigLine>
          <BigLine><Caret /></BigLine>
        </Big>
        <Stack $pt={2} $gap={0} $ml={4}>
          <Btn $w={20} $h={20}><CutIcon /></Btn>
          <Line><Btn $w={20}><CopyIcon /></Btn><Caret $m={1} /></Line>
          <Btn $w={20} $h={20}><BrushIcon /></Btn>
        </Stack>
      </GroupBody>
      <GroupLabel $pr={16}>Área de Transf...</GroupLabel>
      <LauncherBox><Launcher /></LauncherBox>
    </Group>
    <Group $w={182}>
      <GroupBody $pl={3}>
        <Stack>
          <Line>
            <Select $w={97}>Calibri<Caret /></Select>
            <Select $w={38}>12<Caret /></Select>
            <FontStep $w={20} $ml={1}>A</FontStep>
            <FontStep $w={19} $down>A</FontStep>
          </Line>
          <Line>
            <Btn $w={20} $bold $fs={11}>N</Btn>
            <Btn $italic $serif $fs={12}>I</Btn>
            <Btn $under $bold $fs={11}>S</Btn>
            <Caret $m={3} />
            <Sep $m={6} />
            <Btn $w={15}><Borders /></Btn>
            <Caret $m={5} />
            <Sep $m={4} />
            <Btn $w={18}><FillColor /></Btn>
            <Caret $m={4} />
            <Btn $w={19}><FontColor /></Btn>
            <Caret $m={2} />
          </Line>
        </Stack>
      </GroupBody>
      <GroupLabel $pr={14}>Fonte</GroupLabel>
      <LauncherBox><Launcher /></LauncherBox>
    </Group>
    <Group $w={297}>
      <GroupBody $pl={3}>
        <Stack>
          <Line>
            <Btn><Align kind="top" /></Btn>
            <Btn><Align kind="middle" /></Btn>
            <Btn $w={20} $on><Align kind="bottom" /></Btn>
            <Btn $w={18} $ml={9}><Orientation /></Btn>
            <Caret $m={3} />
            <Sep $m={9} />
            <TextBtn><WrapIcon />Quebrar Texto Automaticamente</TextBtn>
          </Line>
          <Line>
            <Btn><Align kind="left" /></Btn>
            <Btn><Align kind="center" /></Btn>
            <Btn><Align kind="right" /></Btn>
            <Sep $m={5} />
            <Btn $w={20}><Indent /></Btn>
            <Btn $w={20}><Indent flip /></Btn>
            <Sep $m={4} />
            <TextBtn><MergeIcon />Mesclar e Centralizar<Caret $m={6} /></TextBtn>
          </Line>
        </Stack>
      </GroupBody>
      <GroupLabel $pr={14}>Alinhamento</GroupLabel>
      <LauncherBox><Launcher /></LauncherBox>
    </Group>
    <Group $w={124}>
      <GroupBody $pl={4}>
        <Stack>
          <Line><Select $w={115}>Geral<Caret /></Select></Line>
          <Line>
            <Btn $w={21}><Currency /></Btn>
            <Caret $m={2} />
            <Btn $w={23} $fs={14}>%</Btn>
            <Btn $w={16} $fs={9}>000</Btn>
            <Sep $m={5} />
            <Btn $w={16}><Decimal /></Btn>
            <Btn $w={20}><Decimal more /></Btn>
          </Line>
        </Stack>
      </GroupBody>
      <GroupLabel $pr={14}>Número</GroupLabel>
      <LauncherBox><Launcher /></LauncherBox>
    </Group>
    <Group $w={200}>
      <GroupBody>
        <BigButton w={73} icon={<ConditionalIcon />} first="Formatação" second="Condicional" />
        <BigButton w={73} icon={<TableStyleIcon />} first="Formatar como" second="Tabela" />
        <BigButton w={49} icon={<CellStyleIcon />} first="Estilos de" second="Célula" />
      </GroupBody>
      <GroupLabel $pr={4}>Estilos</GroupLabel>
    </Group>
    <Group $w={128}>
      <GroupBody $pl={2}>
        <BigButton w={36} icon={<InsertIcon />} first="Inserir" second="" />
        <BigButton w={38} icon={<DeleteIcon />} first="Excluir" second="" />
        <BigButton w={46} icon={<FormatIcon />} first="Formatar" second="" />
      </GroupBody>
      <GroupLabel>Células</GroupLabel>
    </Group>
    <Group $w={148}>
      <GroupBody $pl={4}>
        <Stack $pt={3} $gap={0} $w={29}>
          <Line><Btn $w={17} $fs={20}>Σ</Btn><Caret $m={3} /></Line>
          <Line><Btn $w={17}><FillDown /></Btn><Caret $m={3} /></Line>
          <Line><Btn $w={17}><Eraser /></Btn><Caret $m={3} /></Line>
        </Stack>
        <BigButton w={52} icon={<SortIcon />} first="Classificar" second="e Filtrar" />
        <BigButton w={58} icon={<FindIcon />} first="Localizar e" second="Selecionar" />
      </GroupBody>
      <GroupLabel $pr={4}>Edição</GroupLabel>
    </Group>
    <Group $w={27} $noline>
      <GroupBody />
      <GroupLabel><Tri $up /></GroupLabel>
    </Group>
  </Ribbon>
);

const SheetGrid = () => (
  <Sheet>
    <Corner />
    {colLetters.map((c, i) => (
      <ColHead key={c} $col={i + 2} $on={c === 'A'}>{c}</ColHead>
    ))}
    {rowHeads.map(n => (
      <RowHead key={n} $row={n + 1} $on={n === 1}>{n}</RowHead>
    ))}
    <RowHead $row={18} />

    <HeaderBand>
      <LogoWrap>
        <LogoBulb />
        <LogoName>LUZ</LogoName>
        <LogoSub>Planilhas<br />Empresariais</LogoSub>
      </LogoWrap>
      <NavItem $w={117}>CADASTRO</NavItem>
      <NavItem $w={120} $on>FRETE DE BOBINAS</NavItem>
    </HeaderBand>
    <BlueBand><SubTab>DISTRIBUIÇÃO</SubTab></BlueBand>
    <ActionLabel>Distribuição nos caminhões &gt;</ActionLabel>
    <ActionBtn>Alocar bobinas</ActionBtn>

    <LabelCol $row={7} $tone="head">VEÍCULOS</LabelCol>
    {dataCols.map((col, i) => (
      <Cell key={col} $col={col} $row={7} $tone="head">{i < 2 ? i + 1 : ''}</Cell>
    ))}
    {pesos.map((row, r) => (
      <React.Fragment key={row[0]}>
        <LabelCol $row={r + 8} $tone="sub">{row[0]}</LabelCol>
        {dataCols.map((col, i) => (
          <Cell key={col} $col={col} $row={r + 8} $tone="sub">{row[i + 1]}</Cell>
        ))}
      </React.Fragment>
    ))}
    <RowRule />
    <BobinaLabel $row="11 / 19" $tone="body">{'Relação de\nBobinas a\nserem\ntransportadas'}</BobinaLabel>
    {bobinas.map((row, r) => dataCols.map((col, i) => (
      <Cell key={`${r}-${col}`} $col={col} $row={r + 11} $tone="body">{row[i]}</Cell>
    )))}
  </Sheet>
);

const App = () => (
  <Page>
    <GlobalStyle />
    <TitleBar>
      <QuickAccess>
        <AutoSave>Salvamento Automático</AutoSave>
        <Toggle />
        <QuickBtn $w={16}><SaveIcon /></QuickBtn>
        <QuickBtn $w={20} $ml={7}><Undo2 size={14} color="#6ba488" /></QuickBtn>
        <QuickCaret $m={2} />
        <QuickBtn $w={16}><Redo2 size={14} color="#6ba488" /></QuickBtn>
        <QuickCaret $m={7} />
        <QuickBtn $w={18}><PreviewIcon /></QuickBtn>
        <QuickBtn $w={32}><CameraIcon /></QuickBtn>
        <QuickBtn $w={18}><Customize /></QuickBtn>
      </QuickAccess>
      <DocTitle>Planilha de Frete de Bobinas - Exemplo  -  Excel</DocTitle>
      <TitleRight>
        <SignIn>Entrar</SignIn>
        <WinBtn><CardsIcon /></WinBtn>
        <WinBtn>—</WinBtn>
        <WinBtn><RestoreIcon /></WinBtn>
        <WinBtn><X size={13} /></WinBtn>
      </TitleRight>
    </TitleBar>

    <TabRow>
      <RibbonTab $w={53}>Arquivo</RibbonTab>
      <RibbonTab $w={84} $active>Página Inicial</RibbonTab>
      <RibbonTab $w={53}>Inserir</RibbonTab>
      <RibbonTab $w={102}>Layout da Página</RibbonTab>
      <RibbonTab $w={69}>Fórmulas</RibbonTab>
      <RibbonTab $w={51}>Dados</RibbonTab>
      <RibbonTab $w={60}>Revisão</RibbonTab>
      <RibbonTab $w={47}>Exibir</RibbonTab>
      <RibbonTab $w={93}>Desenvolvedor</RibbonTab>
      <TellMe><Search size={14} style={{ transform: 'scaleX(-1)' }} />Diga-me o que você deseja fazer</TellMe>
      <Share><ShareIcon />Compartilhar</Share>
    </TabRow>

    <RibbonPanel />

    <FormulaBar>
      <Field $w={89}>A1<Caret /></Field>
      <Dots>•••</Dots>
      <FxBtns $w={95}>
        <FxBtn><X size={13} /></FxBtn>
        <FxBtn><Check size={14} /></FxBtn>
        <FxBtn><FxLabel>fx</FxLabel></FxBtn>
      </FxBtns>
      <Field><span /><ChevronDown size={12} color="#666" /></Field>
    </FormulaBar>

    <SheetArea>
      <SheetGrid />
      <Scroll>
        <ScrollArrow><Tri $up /></ScrollArrow>
        <ScrollThumb />
        <ScrollArrow><Tri /></ScrollArrow>
      </Scroll>
    </SheetArea>

    <SheetTabs>
      <TabNav><SideTri $left $c="#c0c0c0" /><SideTri $c="#c0c0c0" /></TabNav>
      {sheets.map(([name, w]) => (
        <SheetTab key={name} $w={w} $on={name === 'FRETE'} $noline={name === 'CAD-VEI'}>{name}</SheetTab>
      ))}
      <AddSheet><PlusCircle /></AddSheet>
      <HScroll>
        <HDots>•••</HDots>
        <HArrow><SideTri $left /></HArrow>
        <HThumb />
        <HTrack />
        <HArrow><SideTri /></HArrow>
      </HScroll>
    </SheetTabs>

    <StatusBar>
      <StatusText>Pronto</StatusText>
      <StatusIcon><MacroIcon /></StatusIcon>
      <ViewGroup>
        <ViewBtn $on><GridView /></ViewBtn>
        <ViewBtn><PageView /></ViewBtn>
        <ViewBtn $mr={2}><BreakView /></ViewBtn>
        <ZoomSign>−</ZoomSign>
        <ZoomSlider><ZoomThumb /></ZoomSlider>
        <ZoomSign>+</ZoomSign>
        <ZoomPct>90%</ZoomPct>
      </ViewGroup>
    </StatusBar>
    <TaskStrip />

    <Selection />
    <Dialog>
      <DialogTitle>UserForm1<X size={15} strokeWidth={1.2} /></DialogTitle>
      <DialogHeading>Escolha a forma que deseja alocar os itens:</DialogHeading>
      <DialogSub>Esse processo leva em média 1 minuto!</DialogSub>
      <ChoiceRow>
        <Choice $focus>Ordem de Cadastro</Choice>
        <Choice>Peso Crescente</Choice>
        <Choice>Peso Decrescente</Choice>
      </ChoiceRow>
    </Dialog>
  </Page>
);

export default App;
